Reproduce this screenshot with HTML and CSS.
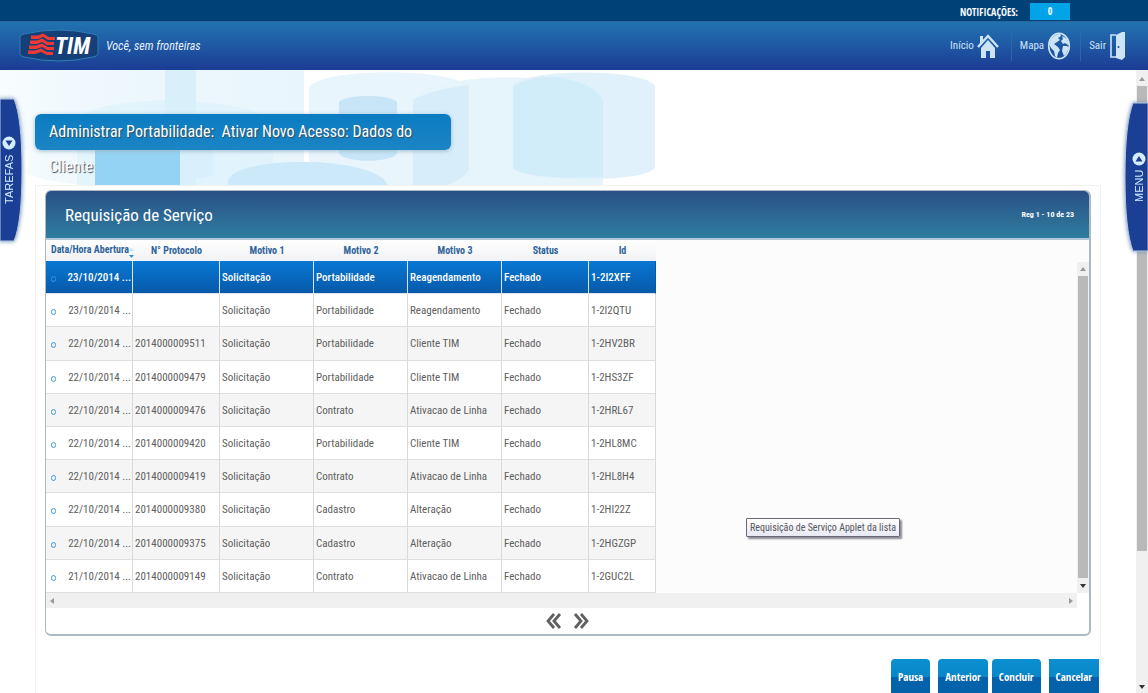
FILE: index.html
```
<!DOCTYPE html>
<html lang="pt-BR">
<head>
<meta charset="utf-8">
<title>TIM - Administrar Portabilidade</title>
<link rel="stylesheet" href="styles.css">
</head>
<body>
<div class="notices">
  <span class="notices-label">NOTIFICAÇÕES:</span>
  <span class="notices-count">0</span>
</div>
<header class="header">
  <a class="brand" href="#" aria-label="TIM">
    <svg class="logo" viewBox="0 0 80 36" width="80" height="36">
      <path d="M1 9Q1 7 5 6Q40 -2 74 6Q79 7 79 9V26Q79 28 74 29Q40 37 5 29Q1 28 1 26Z" fill="#153f78" stroke="#2f7fb8" stroke-width="1"/>
      <path d="M12 6.500H19L24 4.500L30 8H36V11H29L24 8L19 10H12ZM11 11.500H18L23 9.500L29 13H35V16H28L23 13L18 15H11ZM10 16.500H17L23 14.500L29 18H35V21H28L23 18L17 20H10ZM9 21.500H16L22 19.500L28 23H34V26H28L22 23L16 25H9Z" transform="translate(0 1)" fill="#ee3a34"/>
      <text class="logo-text" x="36" y="26">TIM</text>
    </svg>
    <span class="slogan">Você, sem fronteiras</span>
  </a>
  <nav class="nav">
    <a href="#">Início
      <svg viewBox="0 0 22 26" width="22" height="26"><path d="M1 14L11 3L21 14" fill="none" stroke="#cde4f6" stroke-width="2.4"/><path d="M3 3H6V8L3 11Z" fill="#cde4f6"/><path d="M11 7L18 15V25H13V18H9V25H4V15Z" fill="#cde4f6"/></svg>
    </a>
    <a href="#">Mapa
      <svg viewBox="0 0 24 28" width="24" height="28"><ellipse cx="12" cy="14" rx="10.3" ry="12.6" fill="none" stroke="#cde4f6" stroke-width="1.6"/><path d="M4 7Q8 2 13 2L14 4L11 6L13 8L10 10L7 12L11 15L13 18L11 21L10 26L8 24L7 19L4 16L2 12Z M15 4L19 6L22 11L21 13L18 11L16 12L14 9L16 7Z M16 14L20 14L22 16L19 22L17 24L15 19Z" fill="#cde4f6"/></svg>
    </a>
    <a href="#">Sair
      <svg viewBox="0 0 18 30" width="18" height="30"><path d="M7 4H2V26H7" fill="none" stroke="#cde4f6" stroke-width="1.600"/><path d="M7 4L13 1H16V26L13 29L7 27Z" fill="#cde4f6"/><circle cx="9.500" cy="16" r="1" fill="#1c4c9c"/></svg>
    </a>
  </nav>
</header>
<div class="workspace">
  <svg class="backdrop" viewBox="0 0 656 116" width="656" height="116" aria-hidden="true">
    <defs><linearGradient id="sky"><stop offset="0" stop-color="#f8fcfe"/><stop offset=".3" stop-color="#eef8fd"/><stop offset="1" stop-color="#e8f5fc"/></linearGradient></defs>
    <path d="M0 0H304V116H95Q45 112 28 104V80H0Z" fill="url(#sky)"/>
    <rect x="165" width="31" height="116" fill="#d9f0fb"/>
    <path d="M77 50Q90 33 165 30Q250 33 273 50V116H77Z" fill="#d9f0fb" opacity=".55"/>
    <path d="M309 18C318 -3 459 -3 469 18V116H309Z" fill="#e9f5fc"/>
    <path d="M413 30C425 0 590 0 603 30V116H413Z" fill="#e6f4fc"/>
    <path d="M413 30Q430 20 469 15V100Q462 110 445 116H413Z" fill="#d7edfa"/>
    <path d="M513 16C523 -2 645 -2 655 16V98C645 113 523 113 513 98Z" fill="#e1f1fb"/>
    <path d="M513 16Q535 5 558 7Q596 14 603 30V107Q530 110 513 98Z" fill="#d1edfa"/>
    <path d="M339 32C346 24 390 24 397 32V84C390 93 346 93 339 84Z" fill="#c7e5f7"/>
    <path d="M155 78H213V105Q195 112 155 110Z" fill="#d9effb"/>
    <path d="M228 110C236 85 380 85 388 116H228Z" fill="#cce9f9"/>
    <rect x="95" y="78" width="85" height="38" fill="#94d3f3"/>
  </svg>
  <aside class="tab tab-left">
    <svg class="tab-shape" viewBox="0 0 24 144" width="24" height="144"><path d="M0 1H14Q22 20 22 72T14 143H0Z"/></svg>
    <button class="tab-button" type="button">TAREFAS<svg viewBox="0 0 14 14" width="14" height="14"><circle cx="7" cy="7" r="6.500" fill="#d3edff"/><path d="M3.500 4.500H10.500L7 10Z" fill="#1c3f96"/></svg></button>
  </aside>
  <main class="main">
    <h1 class="title">Administrar Portabilidade:&nbsp; Ativar Novo Acesso: Dados do Cliente</h1>
    <section class="content">
      <div class="panel">
        <div class="panel-head"><h2>Requisição de Serviço</h2><span class="range">Reg 1 - 10 de 23</span></div>
        <div class="grid">
          <div class="grid-body">
            <table class="list">
              <colgroup><col class="c-date"><col class="c-prot"><col class="c-m1"><col class="c-m2"><col class="c-m3"><col class="c-status"><col class="c-id"></colgroup>
              <thead><tr><th>Data/Hora Abertura<svg viewBox="0 0 5 10" width="5" height="10"><path d="M0 3L2.500 0L5 3Z" fill="#c5e0f2"/><path d="M0 7H5L2.500 10Z" fill="#3b8fc9"/></svg></th><th>N° Protocolo</th><th>Motivo 1</th><th>Motivo 2</th><th>Motivo 3</th><th>Status</th><th>Id</th></tr></thead>
              <tbody>
                <tr class="selected"><td><i></i>23/10/2014 ...</td><td></td><td>Solicitação</td><td>Portabilidade</td><td>Reagendamento</td><td>Fechado</td><td>1-2I2XFF</td></tr>
                <tr><td><i></i>23/10/2014 ...</td><td></td><td>Solicitação</td><td>Portabilidade</td><td>Reagendamento</td><td>Fechado</td><td>1-2I2QTU</td></tr>
                <tr><td><i></i>22/10/2014 ...</td><td>2014000009511</td><td>Solicitação</td><td>Portabilidade</td><td>Cliente TIM</td><td>Fechado</td><td>1-2HV2BR</td></tr>
                <tr><td><i></i>22/10/2014 ...</td><td>2014000009479</td><td>Solicitação</td><td>Portabilidade</td><td>Cliente TIM</td><td>Fechado</td><td>1-2HS3ZF</td></tr>
                <tr><td><i></i>22/10/2014 ...</td><td>2014000009476</td><td>Solicitação</td><td>Contrato</td><td>Ativacao de Linha</td><td>Fechado</td><td>1-2HRL67</td></tr>
                <tr><td><i></i>22/10/2014 ...</td><td>2014000009420</td><td>Solicitação</td><td>Portabilidade</td><td>Cliente TIM</td><td>Fechado</td><td>1-2HL8MC</td></tr>
                <tr><td><i></i>22/10/2014 ...</td><td>2014000009419</td><td>Solicitação</td><td>Contrato</td><td>Ativacao de Linha</td><td>Fechado</td><td>1-2HL8H4</td></tr>
                <tr><td><i></i>22/10/2014 ...</td><td>2014000009380</td><td>Solicitação</td><td>Cadastro</td><td>Alteração</td><td>Fechado</td><td>1-2HI22Z</td></tr>
                <tr><td><i></i>22/10/2014 ...</td><td>2014000009375</td><td>Solicitação</td><td>Cadastro</td><td>Alteração</td><td>Fechado</td><td>1-2HGZGP</td></tr>
                <tr><td><i></i>21/10/2014 ...</td><td>2014000009149</td><td>Solicitação</td><td>Contrato</td><td>Ativacao de Linha</td><td>Fechado</td><td>1-2GUC2L</td></tr>
              </tbody>
            </table>
            <div class="vscroll">
              <svg viewBox="0 0 6 4" width="6" height="4"><path d="M0 4L3 0L6 4Z" fill="#999"/></svg>
              <span class="thumb"></span>
              <svg viewBox="0 0 6 4" width="6" height="4"><path d="M0 0H6L3 4Z" fill="#333"/></svg>
            </div>
          </div>
          <div class="hscroll">
            <svg viewBox="0 0 4 6" width="4" height="6"><path d="M4 0V6L0 3Z" fill="#999"/></svg>
            <svg viewBox="0 0 4 6" width="4" height="6"><path d="M0 0V6L4 3Z" fill="#999"/></svg>
          </div>
        </div>
        <div class="pager">
          <button type="button" aria-label="Anteriores"><svg viewBox="0 0 16 18" width="16" height="18"><path d="M8 2L2 9L8 16M14 2L8 9L14 16" fill="none" stroke="#606060" stroke-width="2.800"/></svg></button>
          <button type="button" aria-label="Próximos"><svg viewBox="0 0 16 18" width="16" height="18"><path d="M2 2L8 9L2 16M8 2L14 9L8 16" fill="none" stroke="#606060" stroke-width="2.800"/></svg></button>
        </div>
        <div class="tooltip" role="tooltip">Requisição de Serviço Applet da lista</div>
      </div>
      <div class="actions">
        <button type="button">Pausa</button>
        <div class="steps"><button type="button">Anterior</button><button type="button">Concluir</button></div>
        <button class="cancel" type="button">Cancelar</button>
      </div>
    </section>
  </main>
  <div class="page-scroll">
    <svg viewBox="0 0 6 4" width="6" height="4"><path d="M0 4L3 0L6 4Z" fill="#999"/></svg>
    <span class="thumb"></span>
    <svg viewBox="0 0 6 4" width="6" height="4"><path d="M0 0H6L3 4Z" fill="#333"/></svg>
  </div>
  <aside class="tab tab-right">
    <svg class="tab-shape" viewBox="0 0 24 150" width="24" height="150"><path d="M24 1H9Q1 22 1 75T9 149H24Z"/></svg>
    <button class="tab-button" type="button">MENU<svg viewBox="0 0 14 14" width="14" height="14"><circle cx="7" cy="7" r="6.500" fill="#d3edff"/><path d="M3.500 9.500H10.500L7 4Z" fill="#1c3f96"/></svg></button>
  </aside>
</div>
</body>
</html>
```
FILE: styles.css
```
* { box-sizing: border-box; }
body {
  margin: 0;
  height: 100vh;
  display: flex;
  flex-direction: column;
  overflow: hidden;
  background: #fff;
  color: #606060;
  font: 11px/14px "Roboto Condensed", "Arial Narrow", "Liberation Sans", sans-serif;
}
button { font: inherit; border: 0; padding: 0; background: none; cursor: pointer; }
svg { display: block; flex: none; }

.notices {
  flex: none;
  height: 22px;
  padding: 2px 78px 0 0;
  display: flex;
  justify-content: flex-end;
  align-items: center;
  gap: 12px;
  background: #004178;
  border-bottom: 1px solid #2a6598;
  color: #fff;
  font-family: "Open Sans Condensed", "Roboto Condensed", sans-serif;
  font-size: 10px;
  font-weight: bold;
}
.notices-count { width: 40px; height: 17px; line-height: 17px; text-align: center; background: #03a3e8; }
.header {
  flex: none;
  height: 48px;
  padding: 0 21px 0 19px;
  display: flex;
  justify-content: space-between;
  align-items: center;
  background: linear-gradient(#2173b1, #1c3c94);
}
.brand { display: flex; align-items: center; gap: 7px; color: #e4effa; text-decoration: none; }
.logo-text { font: italic bold 23px "Roboto Condensed", "Liberation Sans", sans-serif; fill: #fff; }
.slogan { font-size: 12px; font-style: italic; }
.nav { display: flex; align-items: center; }
.nav a {
  height: 30px;
  padding: 0 9px 0 8px;
  display: flex;
  align-items: center;
  gap: 3px;
  color: #cde4f6;
  text-decoration: none;
  border-left: 1px solid #2a68ad;
}
.nav a:first-child { border: 0; padding-right: 12px; }
.nav a:last-child { padding-right: 0; }

.workspace { flex: 1; min-height: 0; position: relative; display: flex; }
.backdrop { position: absolute; left: 0; top: 0; }
.main { flex: 1; min-width: 0; padding: 44px 35px 0; display: flex; flex-direction: column; position: relative; }
.title {
  flex: none;
  width: 416px;
  height: 36px;
  margin: 0 0 35px;
  padding: 0 14px;
  border-radius: 6px;
  background: linear-gradient(#0b7cc2, #1b85c4);
  box-shadow: 0 1px 4px #9bb8ca;
  color: #fff;
  font-size: 16px;
  font-weight: normal;
  line-height: 35px;
  text-shadow: 1px 1px 1px #334a5c;
}
.content { flex: 1; border: 1px solid #f3f1f1; border-bottom: 0; padding: 4px 9px 0; background: #fff; }
.panel { position: relative; border: 1px solid #aeb9c3; border-width: 1px 2px 2px 1px; border-radius: 6px; background: #fff; }
.panel-head {
  height: 49px;
  padding: 0 15px 0 19px;
  display: flex;
  justify-content: space-between;
  align-items: center;
  border-radius: 5px 5px 0 0;
  border-bottom: 2px solid #b3c8d6;
  background: linear-gradient(#2a5086, #2e7d9f);
  color: #fff;
}
.panel-head h2 { margin: 0; font-size: 17px; line-height: 22px; font-weight: normal; }
.range { font-size: 8px; font-weight: bold; }
.grid-body { display: flex; justify-content: space-between; background: #fcfcfc; }
.list { width: 610px; height: 353px; table-layout: fixed; border-collapse: separate; border-spacing: 0; }
.c-date, .c-prot, .c-status { width: 87px; }
.c-m1, .c-m2, .c-m3 { width: 94px; }
.list th {
  height: 21px;
  padding: 0;
  background: linear-gradient(#fff, #f1f2f4);
  color: #2f6499;
  font-size: 10px;
  font-weight: bold;
  white-space: nowrap;
}
.list th:first-child { padding-left: 5px; }
.list th svg { display: inline-block; vertical-align: -5px; }
.list td {
  height: 33px;
  padding: 2px 2px 0;
  border-right: 1px solid #d9d9d9;
  border-bottom: 1px solid #dedede;
  background: #fff;
  white-space: nowrap;
}
.list tr:nth-child(odd) td { background: #f5f5f5; }
.list td:first-child { padding-right: 1px; text-align: right; }
.list td i { float: left; width: 5px; height: 6px; margin: 5px 0 0 3px; border: 1px solid #3d9be0; border-radius: 3px; }
.list tbody tr.selected td { background: linear-gradient(#0878d4, #0759a9); color: #fff; border-color: #d9e6f2; font-weight: 500; }
.list tbody tr.selected td:last-child { border-right-color: #0759a9; }
.list .selected i { border-color: #3293ed; }
.vscroll, .page-scroll { width: 12px; padding: 5px 0; display: flex; flex-direction: column; align-items: center; background: #f0f0f0; }
.thumb { width: 10px; background: #b9b9b9; }
.vscroll { margin-top: 22px; }
.vscroll .thumb { flex: 1; margin: 5px 0 6px; }
.hscroll { height: 15px; margin-right: 12px; padding: 0 4px; display: flex; justify-content: space-between; align-items: center; background: #f0f0f0; }
.pager { height: 26px; display: flex; justify-content: center; align-items: center; gap: 11px; }
.tooltip {
  position: absolute;
  left: 700px;
  top: 327px;
  padding: 1px 3px;
  border: 1px solid #686878;
  border-radius: 1px;
  background: linear-gradient(#fff, #e8e8f3);
  box-shadow: 2px 2px 2px #8b8b90;
  color: #57575c;
  font-size: 10px;
  line-height: 15px;
}
.actions { margin: 23px -8px 0 0; display: flex; justify-content: flex-end; gap: 8px; }
.steps { display: flex; gap: 4px; }
.actions button {
  height: 36px;
  padding: 0 7px;
  border-radius: 4px 4px 0 0;
  background: linear-gradient(#0b8fd0, #0987c8 50%, #0462ab 51%, #0462ab);
  color: #fff;
  font-family: "Open Sans Condensed", "Roboto Condensed", sans-serif;
  font-size: 11px;
  font-weight: bold;
}
.actions .cancel { border-radius: 0; }

.page-scroll { flex: none; justify-content: space-between; padding: 7px 0 4px; background: #f0f0f0; }
.page-scroll .thumb { flex: none; height: 76%; margin: 5px 0 auto; }
.tab { position: absolute; width: 24px; z-index: 1; }
.tab-left { left: 0; top: 28px; }
.tab-right { right: 0; top: 32px; }
.tab-shape { fill: #1c3f96; stroke: #b4c7dc; stroke-width: 1; overflow: visible; filter: drop-shadow(0 0 2px #7795ba); }
.tab-button {
  position: absolute;
  inset: 0;
  display: flex;
  justify-content: center;
  align-items: center;
  gap: 4px;
  color: #d3edff;
  font: 11px/14px "Liberation Sans", sans-serif;
  writing-mode: vertical-rl;
  transform: rotate(180deg);
}
.tab-left .tab-button { padding-left: 6px; }
.tab-right .tab-button { padding-right: 6px; }
.tab-button svg { transform: rotate(180deg); }
```
